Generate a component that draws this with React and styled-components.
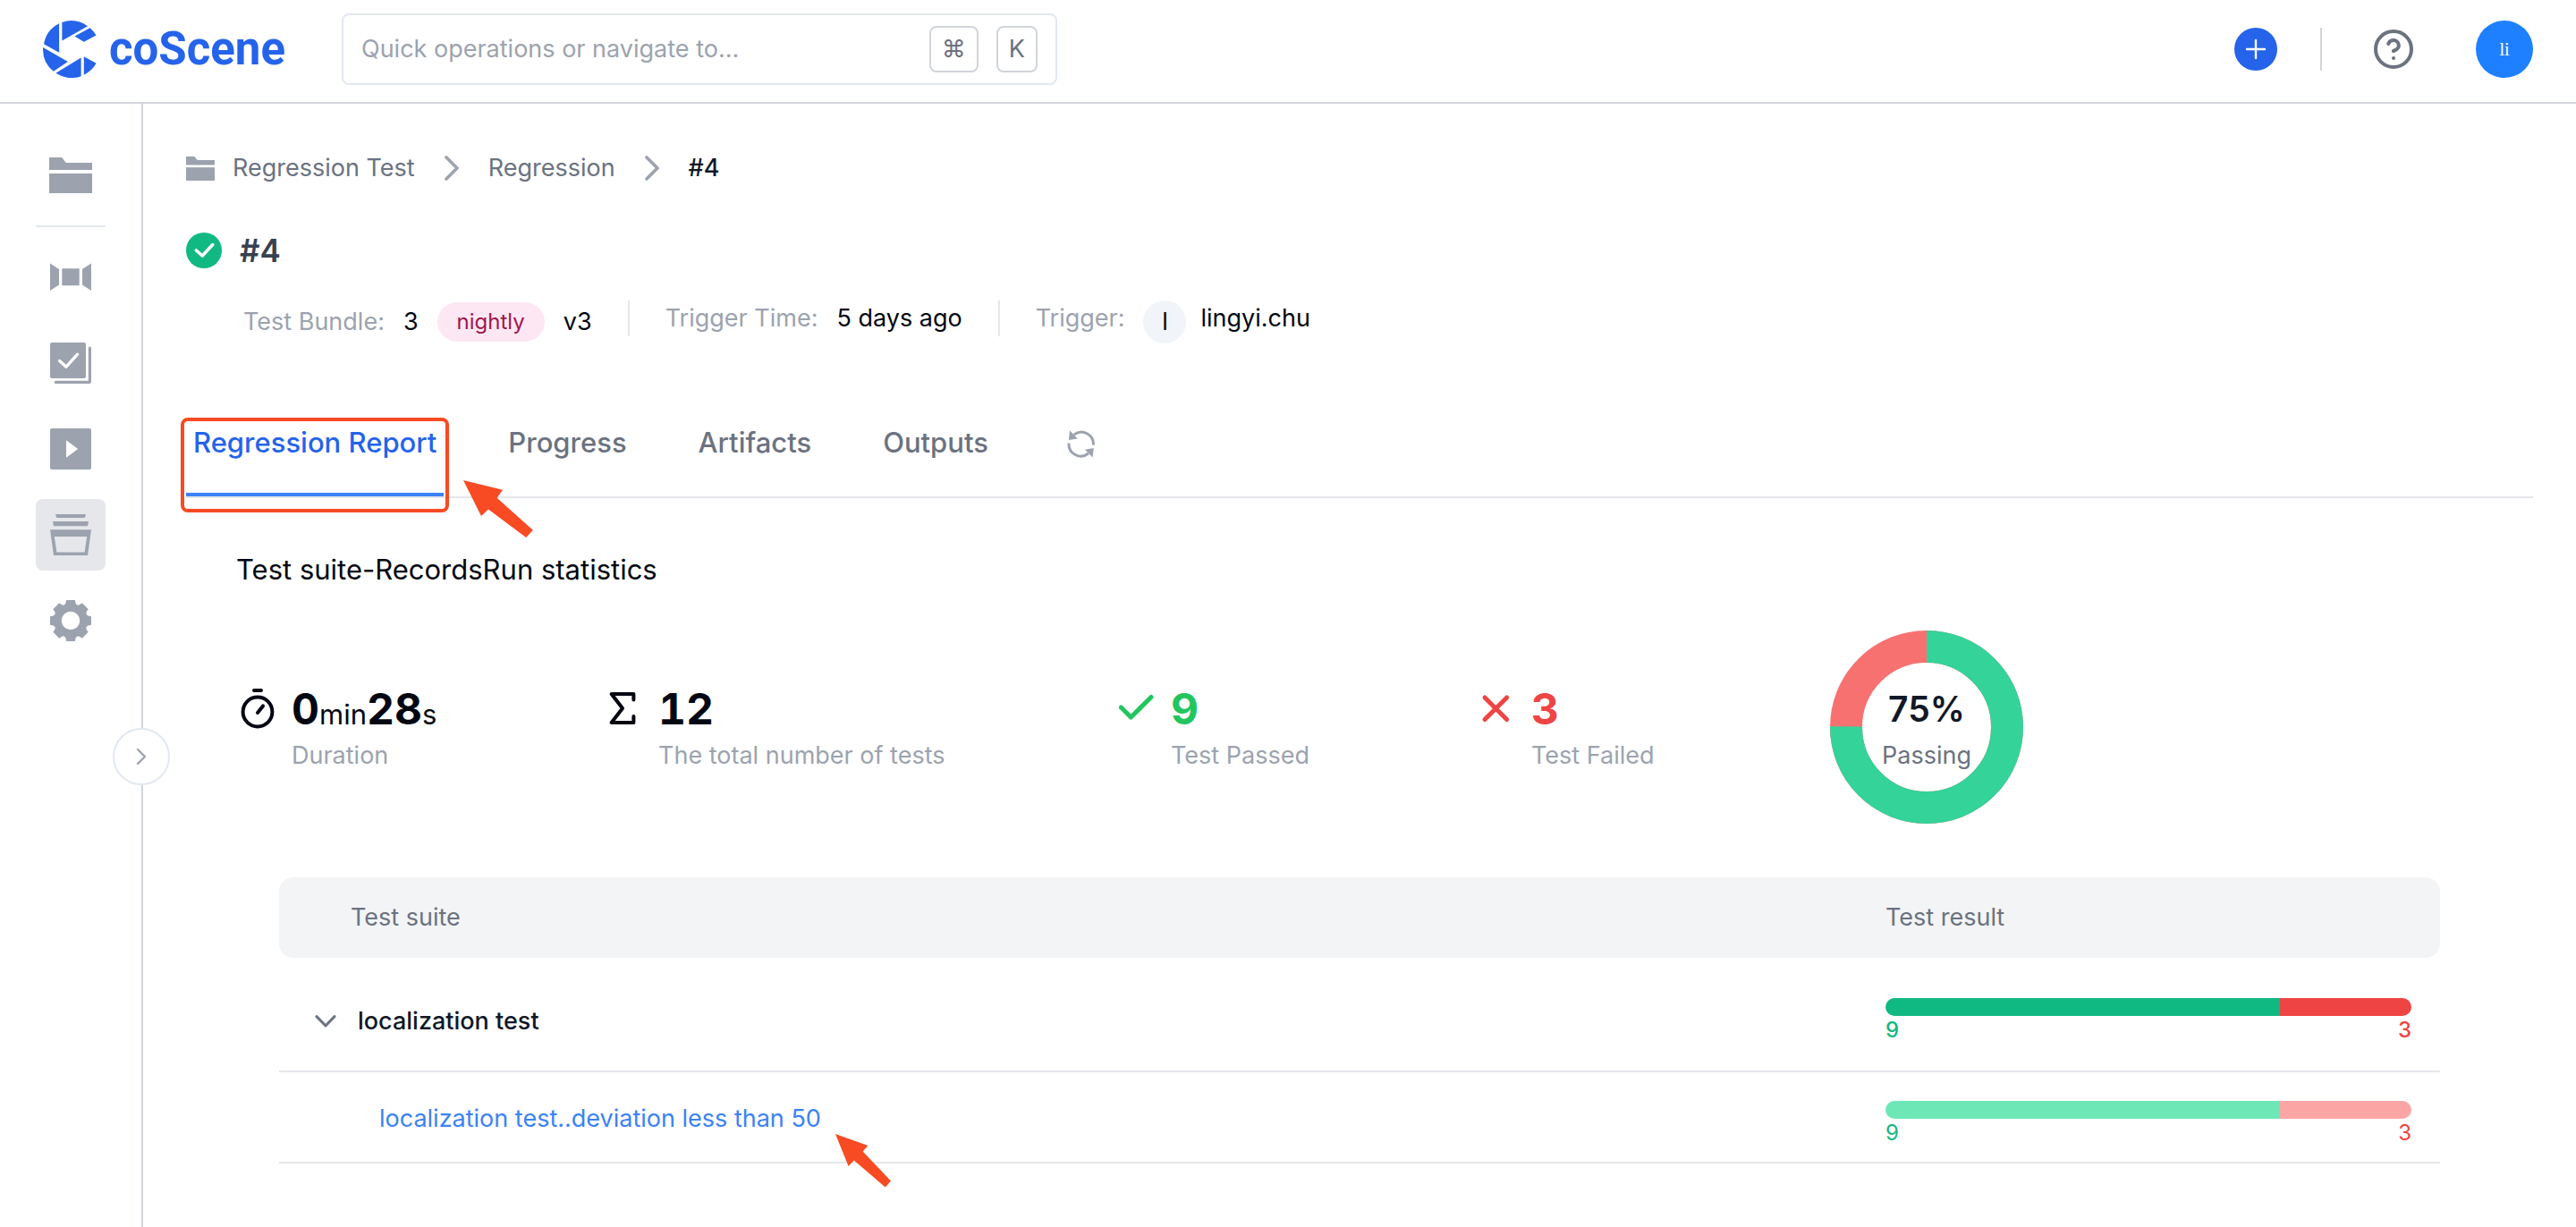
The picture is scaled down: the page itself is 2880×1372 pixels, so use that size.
import React, { useState } from "react";
import styled, { createGlobalStyle, css } from "styled-components";

const color = {
  ink: "#030712",
  strong: "#111827",
  body: "#6b7280",
  muted: "#9ca3af",
  line: "#e5e7eb",
  frame: "#d1d5db",
  field: "#e2e8f0",
  brand: "#2563eb",
  link: "#3b82f6",
  pass: "#10b981",
  fail: "#ef4444",
  mark: "#f84a23",
};

const GlobalStyle = createGlobalStyle`
  *, *::before, *::after { box-sizing: border-box; }
  body {
    margin: 0;
    background: #fff;
    color: ${color.ink};
    font-family: Inter, "Liberation Sans", "DejaVu Sans", sans-serif;
    font-size: 27px;
    line-height: 40px;
  }
  button { font: inherit; color: inherit; background: none; border: 0; padding: 0; cursor: pointer; }
  a { color: inherit; text-decoration: none; }
  svg { display: block; flex: none; }
`;

const Page = styled.div`
  min-height: 100vh;
  display: flex;
  flex-direction: column;
`;

/* Header */

const Header = styled.header`
  display: flex;
  align-items: center;
  padding: 15px 48px 19px;
  border-bottom: 2px solid ${color.frame};
`;

const Logo = styled.a`
  display: flex;
  align-items: center;
  gap: 14px;
  width: 334px;
  color: ${color.brand};
  font: 700 51px/64px Roboto, sans-serif;
`;

const Search = styled.label`
  display: flex;
  align-items: center;
  gap: 20px;
  width: 800px;
  height: 80px;
  padding: 0 20px;
  border: 2px solid ${color.field};
  border-radius: 8px;
`;

const SearchInput = styled.input`
  flex: 1;
  min-width: 0;
  padding: 0;
  border: 0;
  outline: 0;
  font: inherit;
  color: ${color.ink};
  &::placeholder { color: ${color.muted}; opacity: 1; }
`;

const Key = styled.kbd`
  display: flex;
  align-items: center;
  justify-content: center;
  min-width: 46px;
  height: 52px;
  padding: 0 12px;
  border: 2px solid ${color.frame};
  border-radius: 8px;
  font-family: inherit;
  color: ${color.body};
`;

const HeaderActions = styled.div`
  display: flex;
  align-items: center;
  gap: 48px;
  margin-left: auto;
`;

const AddButton = styled.button`
  display: grid;
  place-items: center;
  width: 48px;
  height: 48px;
  border-radius: 50%;
  background: ${color.brand};
  color: #fff;
`;

const HeaderRule = styled.span`
  width: 2px;
  height: 48px;
  background: ${color.frame};
`;

const Account = styled.div`
  display: flex;
  align-items: center;
  gap: 60px;
`;

const HelpButton = styled.button`
  padding: 8px;
  color: ${color.body};
`;

const ProfileButton = styled.button`
  width: 64px;
  height: 64px;
  border-radius: 50%;
  background: #1f80ff;
  color: #fff;
  font: 20px/60px "Liberation Serif", serif;
`;

/* Sidebar */

const Body = styled.div`
  flex: 1;
  display: flex;
`;

const Sidebar = styled.nav`
  position: relative;
  flex: none;
  width: 160px;
  display: flex;
  flex-direction: column;
  gap: 16px;
  padding: 40px 40px 0;
  border-right: 2px solid ${color.frame};
`;

const SideRule = styled.hr`
  width: 100%;
  margin: 0;
  border: 0;
  border-top: 2px solid ${color.field};
`;

const SideLink = styled.a`
  display: grid;
  place-items: center;
  height: 80px;
  border-radius: 8px;
  color: ${color.muted};
  background: ${(p) => (p.$active ? color.line : "none")};
`;

const ExpandButton = styled.button`
  position: absolute;
  top: 698px;
  right: -32px;
  display: grid;
  place-items: center;
  width: 64px;
  height: 64px;
  border: 2px solid ${color.field};
  border-radius: 50%;
  background: #fff;
  color: ${color.muted};
`;

/* Run heading */

const Main = styled.main`
  flex: 1;
  min-width: 0;
  padding: 52px 48px 0;
`;

const Breadcrumb = styled.nav`
  display: flex;
  align-items: center;
  gap: 18px;
  color: ${color.body};
`;

const Separator = styled.span`
  display: grid;
  place-items: center;
  width: 46px;
  color: ${color.muted};
`;

const CrumbLink = styled.a`
  display: flex;
  align-items: center;
  gap: 20px;
`;

const CrumbIcon = styled.span`
  color: ${color.muted};
`;

const Current = styled.span`
  font-weight: 500;
  color: ${color.strong};
`;

const TitleRow = styled.div`
  display: flex;
  align-items: center;
  gap: 20px;
  margin-top: 52px;
`;

const Title = styled.h1`
  margin: 0;
  font-size: 35px;
  font-weight: 600;
  line-height: 40px;
  color: #374151;
`;

const Meta = styled.div`
  display: flex;
  align-items: flex-start;
  gap: 40px;
  margin-top: 36px;
  padding-left: 64px;
`;

const MetaGroup = styled.div`
  display: flex;
  align-items: ${(p) => (p.$centered ? "center" : "flex-start")};
  gap: 21px;
  min-height: 48px;
`;

const MetaLabel = styled.span`
  color: ${color.muted};
`;

const MetaRule = styled.span`
  width: 2px;
  height: 40px;
  background: ${color.line};
`;

const Tag = styled.span`
  padding: 0 22px;
  border-radius: 22px;
  background: #fce7f3;
  color: #9d174d;
  font-size: 24px;
  line-height: 44px;
`;

const Person = styled.span`
  display: flex;
  gap: 16px;
`;

const PersonBadge = styled.span`
  width: 48px;
  height: 48px;
  border-radius: 50%;
  background: #f1f5f9;
  line-height: 48px;
  text-align: center;
`;

/* Tabs */

const Tabs = styled.div`
  display: flex;
  align-items: flex-start;
  gap: 64px;
  margin-top: 87px;
  border-bottom: 2px solid ${color.line};
`;

const TabSlot = styled.div`
  position: relative;
`;

const Tab = styled.button`
  display: block;
  padding: 0 8px 32px;
  border-bottom: 4px solid ${(p) => (p.$active ? color.link : "transparent")};
  color: ${(p) => (p.$active ? color.brand : color.body)};
  font-size: 31px;
  font-weight: 500;
  line-height: 48px;
`;

const RefreshButton = styled.button`
  padding: 10px 16px;
  color: ${color.muted};
`;

const MarkFrame = styled.span`
  position: absolute;
  inset: -4px -6px -18px -6px;
  border: 4px solid ${color.mark};
  border-radius: 8px;
  pointer-events: none;
`;

const MarkArrow = styled.svg`
  position: absolute;
  left: 100%;
  pointer-events: none;
  fill: ${color.mark};
  ${(p) =>
    p.$large
      ? css`
          top: 66px;
          margin-left: 22px;
        `
      : css`
          top: 37px;
          margin-left: 16px;
        `}
`;

/* Report */

const Report = styled.section`
  padding: 56px 56px 0;
`;

const ReportTitle = styled.h2`
  margin: 0;
  font-size: 31px;
  font-weight: 400;
  line-height: 48px;
`;

const Stats = styled.div`
  display: grid;
  grid-template-columns: 410fr 573fr 403fr 396fr 730fr;
  align-items: center;
  margin-top: 44px;
`;

const Stat = styled.div`
  display: grid;
  grid-template-columns: 48px auto;
  justify-content: start;
  align-items: center;
  column-gap: 14px;
  color: ${(p) => p.$tone || color.ink};
`;

const StatValue = styled.div`
  font-size: 48px;
  font-weight: 700;
  font-variant-numeric: tabular-nums;
  line-height: 64px;
`;

const Unit = styled.span`
  font-size: 31px;
  font-weight: 400;
  line-height: 1;
`;

const StatLabel = styled.div`
  grid-column: 2;
  color: ${color.muted};
`;

const Donut = styled.div`
  display: grid;
  place-items: center;
  width: 216px;
  height: 216px;
  > * { grid-area: 1 / 1; }
`;

const DonutText = styled.div`
  text-align: center;
  color: ${color.body};
`;

const Percent = styled.div`
  color: ${color.strong};
  font-size: 39px;
  font-weight: 600;
  line-height: 64px;
`;

/* Suite table */

const TableWrap = styled.div`
  margin-top: 60px;
  padding: 0 48px;
`;

const Table = styled.table`
  width: 100%;
  table-layout: fixed;
  border-collapse: separate;
  border-spacing: 0;
`;

const HeadCell = styled.th`
  width: ${(p) => (p.$result ? "620px" : "auto")};
  padding: 25px 0 25px ${(p) => (p.$result ? "0" : "80px")};
  border-radius: ${(p) => (p.$result ? "0 16px 16px 0" : "16px 0 0 16px")};
  background: #f3f4f6;
  color: ${color.body};
  font-weight: 400;
  text-align: left;
`;

const Cell = styled.td`
  padding: ${(p) => (p.$nested ? "32px 0 28px 112px" : "45px 0 29px 40px")};
  border-bottom: 2px solid ${color.line};
`;

const ResultCell = styled.td`
  padding: ${(p) => (p.$nested ? "32px 32px 16px 0" : "45px 32px 29px 0")};
  border-bottom: 2px solid ${color.line};
  font-weight: ${(p) => (p.$nested ? 400 : 500)};
`;

const SuiteToggle = styled.button`
  display: flex;
  align-items: center;
  gap: 24px;
  color: ${color.strong};
  font-weight: 500;
  > svg { color: ${color.body}; }
`;

const CaseLink = styled.a`
  position: relative;
  display: inline-block;
  vertical-align: top;
  color: ${color.link};
`;

const Bar = styled.div`
  display: flex;
  height: 20px;
  border-radius: 10px;
  overflow: hidden;
`;

const Segment = styled.span`
  background: ${(p) =>
    p.$failed ? (p.$nested ? "#fca5a5" : color.fail) : p.$nested ? "#6ee7b7" : color.pass};
`;

const Counts = styled.div`
  display: flex;
  justify-content: space-between;
  font-size: 24px;
  line-height: 32px;
`;

const Count = styled.span`
  color: ${(p) => (p.$failed ? color.fail : color.pass)};
`;

/* Drawings */

const LogoMark = () => (
  <svg width="60" height="64" viewBox="0 0 60 64" fill="currentColor" aria-hidden="true">
    <path d="M18.1 3.2V35.7L1 26.2A32 32 0 0 1 18.1 3.2Z" />
    <path d="M21.4 1.9A32 32 0 0 1 50 6.2L21.4 22.4Z" />
    <path d="M52.6 8.2A32 32 0 0 1 59.6 16.4L45.8 23.8L35.4 17.4Z" />
    <path d="M.1 30L27.9 46L11.8 56.8A32 32 0 0 1 .1 30Z" />
    <path d="M42.6 41.4V62.2A32 32 0 0 1 14.4 58.8Z" />
    <path d="M45.8 40.2L59.6 47.8A32 32 0 0 1 45.8 60.8Z" />
  </svg>
);

const FolderIcon = ({ width, height }) => (
  <svg width={width} height={height} viewBox="0 0 48 40" fill="currentColor" aria-hidden="true" preserveAspectRatio="none">
    <path d="M0 0H13.5Q14.5 0 15.2 1.2L17.5 4.5Q18.4 6 20.5 6H48V14H0Z" />
    <path d="M0 18H48V40H0Z" />
  </svg>
);

const DeviceIcon = () => (
  <svg width="46" height="46" viewBox="0 0 46 46" fill="currentColor" aria-hidden="true">
    <path d="M0 7.5L10 14V31.5L0 38ZM46 7.5L36 14V31.5L46 38ZM13.3 13.2H32.7V32.3H13.3Z" />
  </svg>
);

const TaskIcon = () => (
  <svg width="46" height="46" viewBox="0 0 46 46" fill="none" aria-hidden="true">
    <rect width="40" height="40" rx="2" fill="currentColor" />
    <path d="M44.4 6.2V43.2Q44.4 44.4 43.2 44.4H6.4" stroke="currentColor" strokeWidth="3.2" strokeLinecap="round" />
    <path d="M10.6 20.6L18 27.2L30.6 13.2" stroke="#fff" strokeWidth="3.4" strokeLinecap="round" strokeLinejoin="round" />
  </svg>
);

const PlayIcon = () => (
  <svg width="46" height="46" viewBox="0 0 46 46" aria-hidden="true">
    <rect width="46" height="46" rx="2" fill="currentColor" />
    <path d="M18 13.2L31.2 23L18 32.8Z" fill="#fff" />
  </svg>
);

const StackIcon = () => (
  <svg width="46" height="46" viewBox="0 0 46 46" fill="currentColor" aria-hidden="true">
    <path d="M6 0H40L39 3.6Q38.8 4 38.2 4H7.8Q7.2 4 7 3.6Z" />
    <path d="M3 8H43L42.2 12.6Q42 13.2 41.4 13.2H4.6Q4 13.2 3.8 12.6Z" />
    <path fillRule="evenodd" d="M0 17.2H46L42 46H4ZM4.8 25L7.4 42.4H38.6L41.2 25Z" />
  </svg>
);

const GearIcon = () => (
  <svg width="46" height="46" viewBox="0 0 46 46" aria-hidden="true">
    <circle cx="23" cy="23" r="14.4" fill="none" stroke="currentColor" strokeWidth="8.4" />
    {[0, 45, 90, 135, 180, 225, 270, 315].map((turn) => (
      <path key={turn} d="M18.2 0H27.8L28.6 3.6Q29.4 5.6 31.6 6.6L23 9.4L14.4 6.6Q16.6 5.6 17.4 3.6Z" fill="currentColor" transform={`rotate(${turn} 23 23)`} />
    ))}
  </svg>
);

const Line = ({ size, d, weight }) => (
  <svg width={size} height={size} viewBox={`0 0 ${size} ${size}`} fill="none" stroke="currentColor" strokeWidth={weight} strokeLinecap="round" strokeLinejoin="round" aria-hidden="true">
    <path d={d} />
  </svg>
);

const HelpIcon = () => (
  <svg width="48" height="48" viewBox="0 0 24 24" fill="none" stroke="currentColor" strokeWidth="2" strokeLinecap="round" strokeLinejoin="round" aria-hidden="true">
    <circle cx="12" cy="12" r="10" />
    <path d="M9.09 9a3 3 0 0 1 5.83 1c0 2-3 3-3 3M12 17h.01" />
  </svg>
);

const DoneIcon = () => (
  <svg width="40" height="40" viewBox="0 0 40 40" fill="none" aria-hidden="true">
    <circle cx="20" cy="20" r="20" fill={color.pass} />
    <path d="M11.4 20L18.2 26L29.8 13.6" stroke="#fff" strokeWidth="3.6" strokeLinecap="round" strokeLinejoin="round" />
  </svg>
);

const RefreshIcon = () => (
  <svg width="32" height="32" viewBox="0 0 32 32" aria-hidden="true">
    <path d="M7.6 5.2A13.4 13.4 0 0 1 29.4 16.6M2 14.6A13.4 13.4 0 0 0 23.8 26" fill="none" stroke="currentColor" strokeWidth="3" />
    <path d="M3 .6L11.8 9.4L1.8 11ZM28.6 30.6L20 21.8L29.8 20Z" fill="currentColor" />
  </svg>
);

const StopwatchIcon = () => (
  <svg width="48" height="48" viewBox="0 0 48 48" fill="none" stroke="currentColor" strokeWidth="4" strokeLinecap="round" aria-hidden="true">
    <circle cx="24" cy="27" r="16.4" />
    <path d="M24 28L30 20.4" />
    <path d="M20 3H28" />
  </svg>
);

const DonutRing = ({ passed }) => {
  const around = 2 * Math.PI * 90;
  return (
    <svg width="216" height="216" viewBox="0 0 216 216" fill="none" strokeWidth="36" role="img" aria-label={`${passed}% passing`}>
      <circle cx="108" cy="108" r="90" stroke="#f87171" />
      <circle cx="108" cy="108" r="90" stroke="#34d399" strokeDasharray={`${(around * passed) / 100} ${around}`} transform="rotate(-90 108 108)" />
    </svg>
  );
};

/* Page */

const sideLinks = [
  { name: "Devices", Icon: DeviceIcon },
  { name: "Tasks", Icon: TaskIcon },
  { name: "Actions", Icon: PlayIcon },
  { name: "Regression", Icon: StackIcon },
  { name: "Settings", Icon: GearIcon },
];

const tabs = ["Regression Report", "Progress", "Artifacts", "Outputs"];

function ResultBar({ passed, failed, nested }) {
  return (
    <>
      <Bar>
        <Segment $nested={nested} style={{ flexGrow: passed }} />
        <Segment $failed $nested={nested} style={{ flexGrow: failed }} />
      </Bar>
      <Counts>
        <Count>{passed}</Count>
        <Count $failed>{failed}</Count>
      </Counts>
    </>
  );
}

export default function App() {
  const [open, setOpen] = useState(true);
  const [tab, setTab] = useState(tabs[0]);

  return (
    <Page>
      <GlobalStyle />
      <Header>
        <Logo href="#home">
          <LogoMark />
          coScene
        </Logo>
        <Search>
          <SearchInput type="text" aria-label="Search" placeholder="Quick operations or navigate to..." />
          <Key>⌘</Key>
          <Key>K</Key>
        </Search>
        <HeaderActions>
          <AddButton aria-label="Create">
            <Line size={24} weight={2.4} d="M12 2V22M2 12H22" />
          </AddButton>
          <HeaderRule />
          <Account>
            <HelpButton aria-label="Help">
              <HelpIcon />
            </HelpButton>
            <ProfileButton>li</ProfileButton>
          </Account>
        </HeaderActions>
      </Header>

      <Body>
        <Sidebar aria-label="Project">
          <SideLink href="#projects" aria-label="Projects">
            <FolderIcon width={48} height={40} />
          </SideLink>
          <SideRule />
          {sideLinks.map(({ name, Icon }) => (
            <SideLink key={name} href={`#${name.toLowerCase()}`} aria-label={name} $active={name === "Regression"}>
              <Icon />
            </SideLink>
          ))}
          <ExpandButton aria-label="Expand sidebar">
            <Line size={24} weight={2.4} d="M8 4L16 12L8 20" />
          </ExpandButton>
        </Sidebar>

        <Main>
          <Breadcrumb aria-label="Breadcrumb">
            <CrumbLink href="#regression-test">
              <CrumbIcon>
                <FolderIcon width={32} height={27} />
              </CrumbIcon>
              Regression Test
            </CrumbLink>
            <Separator>
              <Line size={28} weight={3.6} d="M8 2L20 14L8 26" />
            </Separator>
            <CrumbLink href="#regression">Regression</CrumbLink>
            <Separator>
              <Line size={28} weight={3.6} d="M8 2L20 14L8 26" />
            </Separator>
            <Current aria-current="page">#4</Current>
          </Breadcrumb>

          <TitleRow>
            <DoneIcon />
            <Title>#4</Title>
          </TitleRow>

          <Meta>
            <MetaGroup $centered>
              <MetaLabel>Test Bundle:</MetaLabel>
              <span>3</span>
              <Tag>nightly</Tag>
              <span>v3</span>
            </MetaGroup>
            <MetaRule />
            <MetaGroup>
              <MetaLabel>Trigger Time:</MetaLabel>
              <span>5 days ago</span>
            </MetaGroup>
            <MetaRule />
            <MetaGroup>
              <MetaLabel>Trigger:</MetaLabel>
              <Person>
                <PersonBadge>l</PersonBadge>
                lingyi.chu
              </Person>
            </MetaGroup>
          </Meta>

          <Tabs>
            {tabs.map((name) => (
              <TabSlot key={name}>
                <Tab $active={name === tab} onClick={() => setTab(name)}>
                  {name}
                </Tab>
                {name === tabs[0] && (
                  <>
                    <MarkFrame />
                    <MarkArrow $large width="78" height="64" viewBox="0 0 78 64">
                      <path d="M0 0L44 10.8L37.6 19.8L77.8 55.8L70.2 64L28 32.6L20 40Z" />
                    </MarkArrow>
                  </>
                )}
              </TabSlot>
            ))}
            <RefreshButton aria-label="Refresh">
              <RefreshIcon />
            </RefreshButton>
          </Tabs>

          <Report>
            <ReportTitle>Test suite-RecordsRun statistics</ReportTitle>
            <Stats>
              <Stat>
                <StopwatchIcon />
                <StatValue>
                  0<Unit>min</Unit>28<Unit>s</Unit>
                </StatValue>
                <StatLabel>Duration</StatLabel>
              </Stat>
              <Stat>
                <Line size={48} weight={4} d="M34.4 13.6V7H9.6L22 23L9.6 39H34.4V32" />
                <StatValue>12</StatValue>
                <StatLabel>The total number of tests</StatLabel>
              </Stat>
              <Stat $tone="#22c55e">
                <Line size={48} weight={5} d="M6.4 22L17.4 33L40 10.4" />
                <StatValue>9</StatValue>
                <StatLabel>Test Passed</StatLabel>
              </Stat>
              <Stat $tone={color.fail}>
                <Line size={48} weight={5} d="M10 11L34.6 35.6M34.6 11L10 35.6" />
                <StatValue>3</StatValue>
                <StatLabel>Test Failed</StatLabel>
              </Stat>
              <Donut>
                <DonutRing passed={75} />
                <DonutText>
                  <Percent>75%</Percent>
                  Passing
                </DonutText>
              </Donut>
            </Stats>

            <TableWrap>
              <Table>
                <thead>
                  <tr>
                    <HeadCell scope="col">Test suite</HeadCell>
                    <HeadCell scope="col" $result>
                      Test result
                    </HeadCell>
                  </tr>
                </thead>
                <tbody>
                  <tr>
                    <Cell>
                      <SuiteToggle aria-expanded={open} onClick={() => setOpen(!open)}>
                        <Line size={24} weight={3} d="M2 6.6L12 17L22 6.6" />
                        localization test
                      </SuiteToggle>
                    </Cell>
                    <ResultCell>
                      <ResultBar passed={9} failed={3} />
                    </ResultCell>
                  </tr>
                  {open && (
                    <tr>
                      <Cell $nested>
                        <CaseLink href="#deviation-less-than-50">
                          localization test..deviation less than 50
                          <MarkArrow width="62" height="60" viewBox="0 0 62 60">
                            <path d="M0 0L36.4 13L30.6 19.6L62 52.4L55.8 59.6L20.8 29.4L14.6 36Z" />
                          </MarkArrow>
                        </CaseLink>
                      </Cell>
                      <ResultCell $nested>
                        <ResultBar passed={9} failed={3} nested />
                      </ResultCell>
                    </tr>
                  )}
                </tbody>
              </Table>
            </TableWrap>
          </Report>
        </Main>
      </Body>
    </Page>
  );
}
